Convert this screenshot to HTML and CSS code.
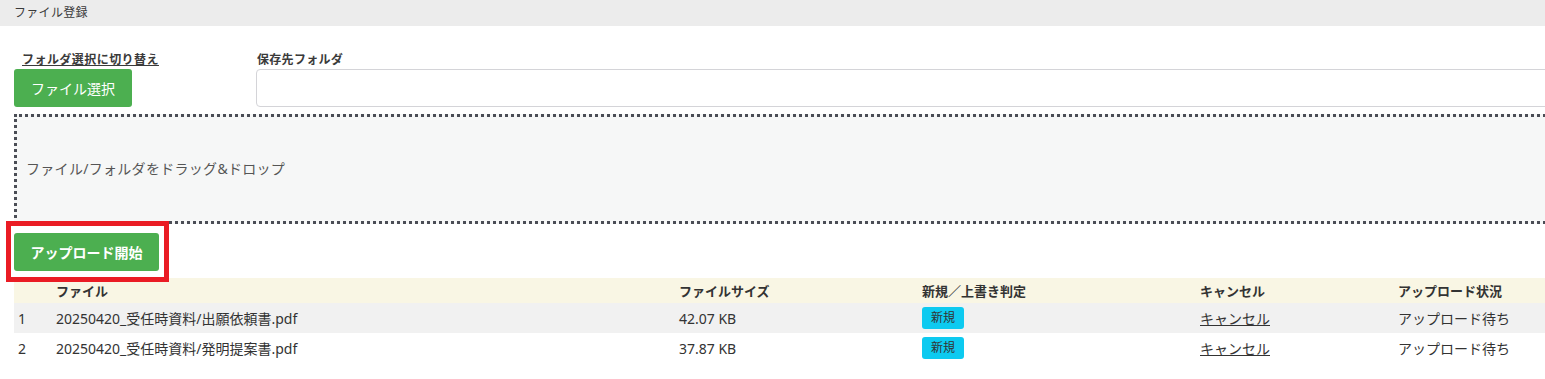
FILE: index.html
```html
<!DOCTYPE html>
<html lang="ja">
<head>
    <meta charset="UTF-8">
    <meta name="viewport" content="width=device-width, initial-scale=1.0">
    <title>ファイル登録</title>
    <link rel="stylesheet" href="styles.css">
</head>
<body>
    <div class="page">
        <!-- タイトルバー -->
        <div class="title-bar">ファイル登録</div>

        <div class="content">
            <!-- 選択エリア -->
            <div class="select-row">
                <div class="select-col">
                    <a href="#" class="switch-link">フォルダ選択に切り替え</a>
                    <button class="btn btn-green">ファイル選択</button>
                </div>
                <div class="folder-col">
                    <label class="field-label" for="folder">保存先フォルダ</label>
                    <input type="text" id="folder" class="folder-input">
                </div>
            </div>

            <!-- ドロップエリア -->
            <div class="drop-zone">ファイル/フォルダをドラッグ&amp;ドロップ</div>

            <div class="upload-row">
                <button class="btn btn-green btn-bold">アップロード開始</button>
                <span class="highlight"></span>
            </div>

            <!-- ファイル一覧 -->
            <table class="file-table">
                <colgroup>
                    <col style="width: 38px">
                    <col style="width: 623px">
                    <col style="width: 243px">
                    <col style="width: 278px">
                    <col style="width: 198px">
                    <col>
                </colgroup>
                <thead>
                    <tr>
                        <th></th>
                        <th>ファイル</th>
                        <th>ファイルサイズ</th>
                        <th>新規／上書き判定</th>
                        <th>キャンセル</th>
                        <th>アップロード状況</th>
                    </tr>
                </thead>
                <tbody>
                    <tr>
                        <td>1</td>
                        <td>20250420_受任時資料/出願依頼書.pdf</td>
                        <td>42.07 KB</td>
                        <td><span class="badge">新規</span></td>
                        <td><a href="#" class="cancel-link">キャンセル</a></td>
                        <td>アップロード待ち</td>
                    </tr>
                    <tr>
                        <td>2</td>
                        <td>20250420_受任時資料/発明提案書.pdf</td>
                        <td>37.87 KB</td>
                        <td><span class="badge">新規</span></td>
                        <td><a href="#" class="cancel-link">キャンセル</a></td>
                        <td>アップロード待ち</td>
                    </tr>
                </tbody>
            </table>
        </div>
    </div>
</body>
</html>
```

FILE: styles.css
```css
:root {
    --green: #4caf50;
    --text-dark: #333333;
    --title-bg: #ececec;
    --drop-bg: #f6f7f7;
    --head-bg: #f9f6e4;
    --stripe-bg: #f1f1f1;
    --badge-bg: #0dcaf0;
}

* {
    box-sizing: border-box;
    margin: 0;
    padding: 0;
}

html, body {
    overflow: hidden;
}

body {
    font-family: "Noto Sans", "Noto Sans CJK JP", sans-serif;
    color: var(--text-dark);
    background: white;
}

.page {
    width: 1620px;
}

.title-bar {
    height: 26px;
    line-height: 26px;
    background: var(--title-bg);
    font-size: 12px;
    letter-spacing: 0.3px;
    padding-left: 14px;
    color: #3a3a3a;
}

.content {
    padding: 0 14px;
}

.select-row {
    display: flex;
    padding-top: 25px;
}

.select-col {
    width: 242px;
    display: flex;
    flex-direction: column;
    align-items: flex-start;
}

.switch-link {
    font-size: 12px;
    font-weight: bold;
    letter-spacing: 0.45px;
    color: #3a3a3a;
    line-height: 18px;
    margin-left: 8px;
}

.folder-col {
    flex: 1;
    display: flex;
    flex-direction: column;
}

.field-label {
    font-size: 12px;
    font-weight: bold;
    letter-spacing: 0.3px;
    line-height: 18px;
    margin-left: 1px;
    color: #3a3a3a;
}

.btn {
    background: var(--green);
    color: white;
    border: none;
    border-radius: 3px;
    height: 38px;
    padding: 0 17px;
    font-family: inherit;
    font-size: 14px;
    cursor: pointer;
}

.btn-bold {
    font-weight: bold;
}

.folder-input {
    height: 38px;
    border: 1px solid #d4d4d8;
    border-radius: 4px;
    width: 100%;
}

.drop-zone {
    margin-top: 7px;
    height: 110px;
    background: var(--drop-bg);
    border: 3px dotted #4a4d55;
    display: flex;
    align-items: center;
    padding: 0 0 2px 9px;
    font-size: 14px;
    letter-spacing: 0.3px;
    color: #555555;
}

.upload-row {
    position: relative;
    display: inline-block;
    margin-top: 9px;
}

.upload-row .btn {
    display: block;
    width: 145px;
    padding: 0;
}

.highlight {
    position: absolute;
    top: -12px;
    left: -8px;
    right: -10px;
    bottom: -11px;
    border: 5px solid #ea1c24;
    pointer-events: none;
}

.file-table {
    margin-top: 7px;
    width: 100%;
    border-collapse: collapse;
    table-layout: fixed;
    font-size: 14px;
}

.file-table th {
    background: var(--head-bg);
    font-size: 13px;
    font-weight: bold;
    text-align: left;
    height: 25px;
    padding-left: 4px;
}

.file-table td {
    height: 30px;
    padding-left: 4px;
}

.file-table tbody tr:nth-child(odd) {
    background: var(--stripe-bg);
}

.badge {
    display: inline-block;
    background: var(--badge-bg);
    border-radius: 3px;
    font-size: 12px;
    line-height: 22px;
    padding: 0 9px;
    color: #333;
    vertical-align: middle;
}

.cancel-link {
    color: var(--text-dark);
}
```
